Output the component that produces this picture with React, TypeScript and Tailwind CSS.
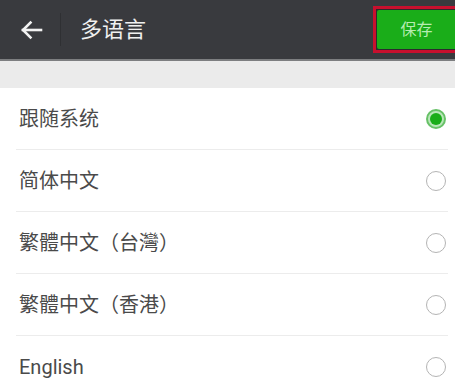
import React from 'react';

const languages = ['跟随系统', '简体中文', '繁體中文（台灣）', '繁體中文（香港）', 'English'];

const font = { fontFamily: '"Roboto", "Noto Sans CJK SC", sans-serif' };

const App: React.FC = () => {
  const [selected, setSelected] = React.useState(0);

  return (
    <div className="w-[455px] h-[381px] overflow-hidden bg-white" style={font}>
      <div className="h-[61px] bg-[#393a3e] flex items-center border-b-2 border-[#7d7e80] overflow-hidden">
        <button className="w-[60px] h-full flex items-center pl-[20px] shrink-0">
          <svg width="23" height="20" viewBox="0 0 23 20" fill="none" stroke="#f2f2f2" strokeWidth="2.6" strokeLinecap="square">
            <path d="M3 10h18" />
            <path d="M10.5 2.5L3 10l7.5 7.5" />
          </svg>
        </button>
        <div className="w-px h-[33px] bg-[#2f3033] shrink-0" />
        <h1 className="ml-[19px] text-[22px] text-[#f0f0f0] flex-1">多语言</h1>
        <div className="self-start shrink-0 w-[88px] mr-[-6px] mt-[6px] border-[3px] border-[#c8102e] pl-px py-px bg-[#2a2b2e]">
          <button className="w-full h-[39px] bg-[#1aad19] rounded-l-[2px] text-[16px] text-[#b6ecb1] pr-[2px]">
            保存
          </button>
        </div>
      </div>
      <div className="h-[27px] bg-[#ebebeb]" />
      <ul>
        {languages.map((name, i) => (
          <li
            key={name}
            onClick={() => setSelected(i)}
            className="h-[62px] ml-[16px] mr-[7px] flex items-center justify-between border-b border-[#ececec] last:border-b-0"
          >
            <span className="pl-[3px] text-[20px] text-[#4a4a4a]">{name}</span>
            {selected === i ? (
              <span className="w-[20px] h-[20px] mr-[2px] rounded-full border-[2px] border-[#67c167] bg-[#b9e6b9] flex items-center justify-center">
                <span className="w-[12px] h-[12px] rounded-full bg-[#1aad19]" />
              </span>
            ) : (
              <span className="w-[20px] h-[20px] mr-[2px] rounded-full border-[1.5px] border-[#b4b4b4]" />
            )}
          </li>
        ))}
      </ul>
    </div>
  );
};

export default App;
